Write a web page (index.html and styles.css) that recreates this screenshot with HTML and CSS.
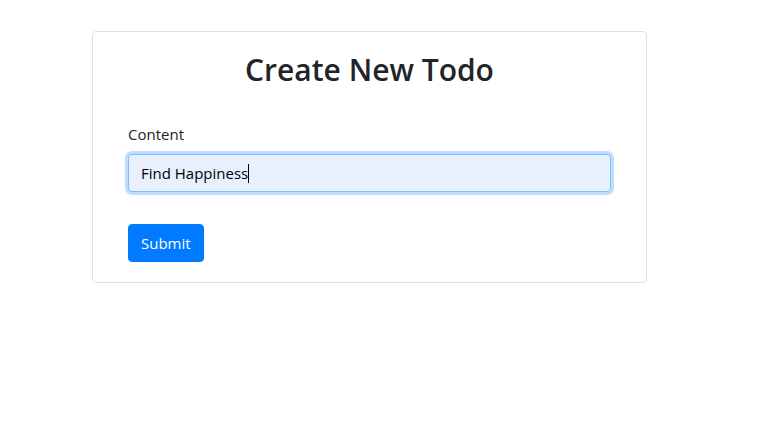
FILE: index.html
```html
<!DOCTYPE html>
<html lang="en">
<head>
<meta charset="utf-8">
<title>Create New Todo</title>
<link rel="stylesheet" href="styles.css">
</head>
<body>
<main class="page">
  <section class="card">
    <h2 class="card-title">Create New Todo</h2>
    <form class="todo-form">
      <div class="form-group">
        <label class="form-label">Content</label>
        <div class="form-control" role="textbox">Find Happiness<span class="caret"></span></div>
      </div>
      <button type="button" class="btn-primary">Submit</button>
    </form>
  </section>
</main>
</body>
</html>
```
FILE: styles.css
```css
* { box-sizing: border-box; }
html, body { margin: 0; padding: 0; background: #fff; }
body {
  font-family: "Open Sans", "Noto Sans", sans-serif;
  font-size: 15px;
  line-height: 24px;
  color: #212529;
}
.page {
  padding: 31px 0 0 92px;
}
.card {
  width: 555px;
  border: 1px solid #dfdfdf;
  border-radius: 4px;
  padding: 20px 20px 20px;
}
.card-title {
  margin: 0 0 32px;
  text-align: center;
  font-size: 30px;
  font-weight: 600;
  line-height: 36px;
}
.todo-form {
  padding: 2px 15px 0;
}
.form-group {
  margin-bottom: 32px;
}
.form-label {
  display: block;
  margin-bottom: 8px;
}
.form-control {
  height: 38px;
  padding: 6px 12px;
  border: 1px solid #80bdff;
  border-radius: 4px;
  background: #e8f0fe;
  box-shadow: 0 0 0 3px rgba(0, 123, 255, 0.25);
  color: #000;
  display: flex;
  align-items: center;
}
.caret {
  display: inline-block;
  width: 1px;
  height: 19px;
  background: #000;
}
.btn-primary {
  font: inherit;
  height: 38px;
  padding: 0 12px;
  border: 1px solid #007bff;
  border-radius: 4px;
  background: #007bff;
  color: #fff;
}
```
